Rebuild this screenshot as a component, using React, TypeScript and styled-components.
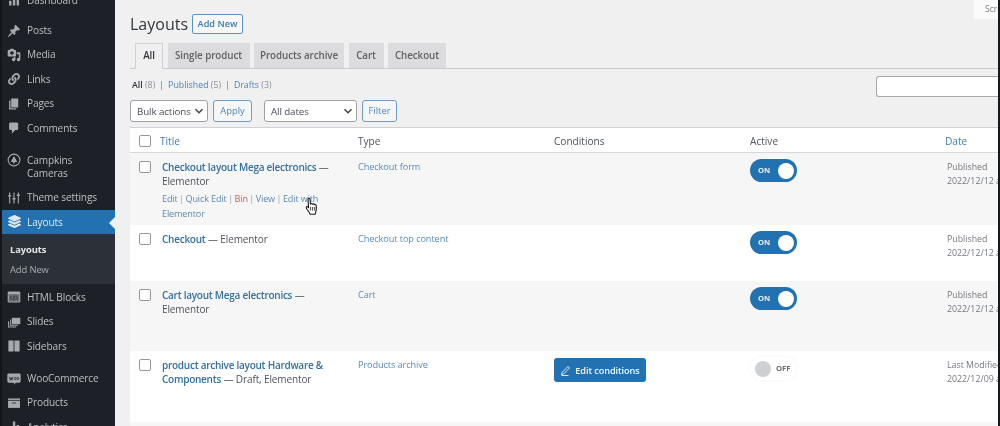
import React from "react";
import styled, { createGlobalStyle } from "styled-components";
import { FaLink, FaLayerGroup } from "react-icons/fa";

const Global = createGlobalStyle`
  html, body { margin: 0; padding: 0; background: #f0f0f1; overflow: hidden; }
  * { box-sizing: border-box; }
`;

const Page = styled.div`
  position: relative;
  width: 1000px;
  height: 426px;
  overflow: hidden;
  display: flex;
  font-family: "Open Sans", "Noto Sans", sans-serif;
  font-size: 10px;
  color: #3c434a;
  background: #f0f0f1;
  border-right: 2px solid #17191c;
  filter: blur(0.4px);
`;

const Side = styled.nav`
  width: 115px;
  flex: none;
  height: 426px;
  overflow: hidden;
  background: #1d2127;
  color: #c3c4c7;
  border-left: 2px solid #14161a;
`;

const MenuList = styled.div`
  margin-top: -12px;
  display: flex;
  flex-direction: column;
`;

const Item = styled.div<{ $gap?: number; $active?: boolean; $h?: number }>`
  position: relative;
  display: flex;
  align-items: ${(p) => (p.$h ? "flex-start" : "center")};
  height: ${(p) => p.$h ?? 24.4}px;
  margin-top: ${(p) => p.$gap ?? 0}px;
  padding-left: 25px;
  padding-top: ${(p) => (p.$h ? 7 : p.$active ? 2 : 0)}px;
  font-size: 10.1px;
  letter-spacing: -0.13px;
  line-height: 13px;
  flex: none;
  background: ${(p) => (p.$active ? "#2271b1" : "transparent")};
  color: ${(p) => (p.$active ? "#dfe9f2" : "#bcbfc3")};
`;

const IconSlot = styled.span<{ $active?: boolean; $top?: number }>`
  position: absolute;
  left: 5px;
  top: ${(p) => (p.$top !== undefined ? `${p.$top}px` : "50%")};
  margin-top: ${(p) => (p.$top !== undefined ? 0 : -7)}px;
  width: 14px;
  height: 14px;
  display: flex;
  align-items: center;
  justify-content: center;
  color: ${(p) => (p.$active ? "#dfe9f2" : "#a7aaad")};
  svg { display: block; }
`;

const Arrow = styled.span`
  position: absolute;
  right: 0;
  top: 7px;
  border-style: solid;
  border-width: 6px 6px 6px 0;
  border-color: transparent #f0f0f1 transparent transparent;
`;

const SubMenu = styled.div`
  background: #2c3138;
  height: 50px;
  padding-top: 5px;
  flex: none;
  display: flex;
  flex-direction: column;
  margin-bottom: 1px;
`;

const SubItem = styled.div<{ $on?: boolean }>`
  height: 20px;
  line-height: 21px;
  padding-left: 8px;
  font-size: 9.4px;
  letter-spacing: -0.1px;
  font-weight: ${(p) => (p.$on ? 700 : 400)};
  color: ${(p) => (p.$on ? "#e6e7e8" : "#a9adb2")};
`;

const Main = styled.main`
  flex: 1;
  min-width: 0;
  position: relative;
  padding-left: 15px;
  display: flex;
  flex-direction: column;
  overflow: hidden;
`;

const ScreenTab = styled.div`
  position: absolute;
  top: 0;
  right: 0;
  width: 24px;
  height: 19px;
  background: #fbfbfc;
  padding-left: 11px;
  line-height: 19px;
  font-size: 8.6px;
  color: #7a7e83;
  white-space: nowrap;
  overflow: hidden;
`;

const HeadRow = styled.div`
  display: flex;
  align-items: center;
  gap: 4px;
  height: 20px;
  margin-top: 14px;
`;

const Heading = styled.h1`
  margin: 0;
  font-size: 16px;
  font-weight: 400;
  color: #32373c;
  line-height: 20px;
`;

const AddNew = styled.span`
  width: 51px;
  height: 20px;
  line-height: 18px;
  border: 1px solid #5b93c2;
  border-radius: 2px;
  background: #f6f7f7;
  text-align: center;
  font-size: 9.2px;
  font-weight: 600;
  color: #3a7cb0;
`;

const Tabs = styled.div`
  display: flex;
  height: 26px;
  margin-top: 9px;
  padding-left: 5px;
  gap: 4.5px;
  border-bottom: 1px solid #c9cbce;
`;

const Tab = styled.div<{ $w: number; $on?: boolean }>`
  width: ${(p) => p.$w}px;
  height: ${(p) => (p.$on ? 26 : 25)}px;
  border: 1px solid ${(p) => (p.$on ? "#d0d2d5" : "#dcdcde")};
  border-bottom: ${(p) => (p.$on ? "none" : "1px solid #dcdcde")};
  background: ${(p) => (p.$on ? "#f0f0f1" : "#dcdcde")};
  text-align: center;
  line-height: 24px;
  font-size: 9.8px;
  letter-spacing: -0.07px;
  font-weight: 600;
  color: ${(p) => (p.$on ? "#32373c" : "#5e6267")};
`;

const FilterBar = styled.div`
  display: flex;
  justify-content: space-between;
  height: 21px;
  margin-top: 7px;
`;

const Subsub = styled.div`
  margin-top: 2px;
  padding-left: 2px;
  font-size: 8.8px;
  line-height: 14px;
  color: #8a8e93;
  b { color: #32373c; font-weight: 600; }
  a { color: #4a86b8; }
  i { font-style: normal; color: #6a6f75; margin: 0 4px; }
`;

const Search = styled.div`
  width: 122px;
  height: 21px;
  background: #fff;
  border: 1px solid #a5a8ac;
  border-right: none;
  border-radius: 3px 0 0 3px;
`;

const Controls = styled.div`
  display: flex;
  height: 22px;
  margin-top: 3px;
`;

const Select = styled.div<{ $w: number; $gap: number }>`
  width: ${(p) => p.$w}px;
  margin-left: ${(p) => p.$gap}px;
  height: 22px;
  padding: 0 3px 0 6px;
  background: #fff;
  border: 1px solid #9ea2a7;
  border-radius: 3px;
  display: flex;
  align-items: center;
  justify-content: space-between;
  font-size: 9.8px;
  letter-spacing: -0.12px;
  white-space: nowrap;
  color: #4a4f55;
`;

const Ghost = styled.div<{ $w: number; $gap: number }>`
  width: ${(p) => p.$w}px;
  margin-left: ${(p) => p.$gap}px;
  height: 22px;
  line-height: 20px;
  text-align: center;
  border: 1px solid #6f9dc4;
  border-radius: 3px;
  background: #f4f6f8;
  color: #4f88b8;
  font-size: 9.4px;
`;

const Table = styled.div`
  margin-top: 5px;
  width: 868px;
  background: #fff;
  border-top: 1px solid #cfd1d4;
`;

const grid = "30px 198px 196px 196px 195px 53px";

const HeaderRow = styled.div`
  display: grid;
  grid-template-columns: ${grid};
  height: 25px;
  padding-top: 1px;
  align-items: center;
  border-bottom: 1px solid #d5d7da;
  font-size: 10.1px;
  color: #50555b;
`;

const Row = styled.div<{ $h: number; $alt?: boolean }>`
  display: grid;
  grid-template-columns: ${grid};
  height: ${(p) => p.$h}px;
  background: ${(p) => (p.$alt ? "#f6f6f7" : "#fff")};
  align-items: start;
  padding-top: 7px;
`;

const Box = styled.span`
  display: block;
  width: 12px;
  height: 12px;
  margin-left: 9px;
  background: #fff;
  border: 1px solid #94989d;
  border-radius: 2px;
`;

const RowBox = styled(Box)`
  margin-top: 1px;
`;

const HeaderLink = styled.span`
  color: #3f7fb3;
`;

const TitleCell = styled.div`
  padding-left: 2px;
  width: 172px;
  font-size: 10px;
  letter-spacing: -0.12px;
  line-height: 14.3px;
  color: #50555b;
  a { color: #35719f; font-weight: 600; letter-spacing: -0.26px; }
`;

const TitleWide = styled(TitleCell)`
  width: 178px;
`;

const Actions = styled.div`
  margin-top: 3.5px;
  font-size: 9.1px;
  letter-spacing: -0.14px;
  line-height: 14.4px;
  color: #5d8bb3;
  span { color: #9a9ea3; margin: 0 1.5px; }
  em { font-style: normal; color: #b06a6a; background: #f9f1f1; }
`;

const TypeCell = styled.div`
  font-size: 9.2px;
  letter-spacing: -0.1px;
  line-height: 14px;
  color: #5a8db8;
`;

const ConditionsBtn = styled.div`
  width: 92px;
  height: 24px;
  display: flex;
  align-items: center;
  justify-content: center;
  gap: 3px;
  background: #2271b1;
  border-radius: 3px;
  color: #f0f6fb;
  font-size: 9.2px;
  font-weight: 600;
  letter-spacing: -0.1px;
`;

const Toggle = styled.div<{ $on?: boolean }>`
  position: relative;
  width: 47px;
  height: 23px;
  margin-top: -1px;
  border-radius: 12px;
  background: ${(p) => (p.$on ? "#2271b1" : "#fff")};
  box-shadow: ${(p) => (p.$on ? "none" : "0 0 3px rgba(0,0,0,.06)")};
  color: ${(p) => (p.$on ? "#e4eef6" : "#6a6e73")};
  font-size: 7.6px;
  font-weight: 700;
  line-height: 23px;
  padding-left: ${(p) => (p.$on ? 8 : 26)}px;
`;

const Knob = styled.span<{ $on?: boolean }>`
  position: absolute;
  top: 3.5px;
  left: ${(p) => (p.$on ? 28 : 5)}px;
  width: 16px;
  height: 16px;
  border-radius: 50%;
  background: ${(p) => (p.$on ? "#fff" : "#cfd0d2")};
`;

const DateCell = styled.div`
  padding-left: 2px;
  white-space: nowrap;
  font-size: 8.8px;
  line-height: 14px;
  color: #75797e;
`;

const Cursor = styled.svg`
  position: absolute;
  left: 190px;
  top: 197px;
`;

const Chevron = () => (
  <svg width="10" height="10" viewBox="0 0 10 10">
    <path d="M1.5 3.2 5 6.8l3.5-3.6" fill="none" stroke="#3c434a" strokeWidth="1.4" />
  </svg>
);

const S = ({ children, size = 14 }: { children: React.ReactNode; size?: number }) => (
  <svg width={size} height={size} viewBox="0 0 20 20" fill="currentColor">
    {children}
  </svg>
);

const Pin = () => <S><path d="M10.44 3.02l1.82-1.82 6.36 6.35-1.83 1.82c-1.05-.68-2.48-.57-3.41.36l-.75.75c-.92.93-1.04 2.35-.35 3.41l-1.83 1.82-2.41-2.41-2.8 2.79c-.42.42-3.38 2.71-3.8 2.29s1.86-3.39 2.28-3.8l2.79-2.79L4.1 9.36l1.83-1.82c1.05.69 2.48.57 3.4-.36l.75-.75c.93-.92 1.05-2.35.36-3.41z" /></S>;
const Media = () => <S><path d="M13 11V4c0-.55-.45-1-1-1h-1.67L9 1H5L3.67 3H2c-.55 0-1 .45-1 1v7c0 .55.45 1 1 1h10c.55 0 1-.45 1-1zM7 4.5c1.38 0 2.5 1.12 2.5 2.5S8.38 9.5 7 9.5 4.5 8.38 4.5 7 5.62 4.5 7 4.5zM14 6h5v10.5c0 1.38-1.12 2.5-2.5 2.5S14 17.88 14 16.5s1.12-2.5 2.5-2.5c.17 0 .34.02.5.05V9h-3V6zm-4 8.05V13h2v3.5c0 1.38-1.12 2.5-2.5 2.5S7 17.88 7 16.5 8.12 14 9.5 14c.17 0 .34.02.5.05z" /></S>;
const Pages = () => <S><path d="M6 15V2h10v13H6zm-1 1h8v2H3V5h2v11z" /></S>;
const Comments = () => <S><path d="M5 2h9c1.1 0 2 .9 2 2v7c0 1.1-.9 2-2 2h-2l-5 5v-5H5c-1.1 0-2-.9-2-2V4c0-1.1.9-2 2-2z" /></S>;
const Camp = () => <S><circle cx="10" cy="10" r="8.4" fill="none" stroke="currentColor" strokeWidth="1.5" /><path d="M10 4.2 14.6 13H11v2H9v-2H5.4z" /></S>;
const Sliders = () => (
  <S>
    <path d="M3 2h1.6v4H6v2H4.6v10H3V8H1.6V6H3zM9.2 2h1.6v8h1.4v2h-1.4v6H9.2v-6H7.8v-2h1.4zM15.4 2H17v3h1.4v2H17v11h-1.6V7H14V5h1.4z" />
  </S>
);
const HtmlBlock = () => (
  <S>
    <rect x="1" y="2" width="18" height="16" rx="2" />
    <rect x="2.5" y="6" width="15" height="10.5" fill="#1d2127" opacity=".45" />
    <path d="M7.5 8.5 5 11.2l2.5 2.7M12.5 8.5l2.5 2.7-2.5 2.7M10.8 8l-1.6 6.5" fill="none" stroke="#1d2127" strokeWidth="1" />
  </S>
);
const Slides = () => <S><path d="M7 4h12v9H7z" /><path d="M4.5 6.5H6V14h10v1.5H4.5z" /><path d="M1.5 9H3v7.5h10V18H1.5z" /></S>;
const Sidebars = () => <S><path d="M2 2h7.4v16H2zM10.6 2H18v16h-7.4z" /></S>;
const Woo = () => (
  <svg width="15" height="15" viewBox="0 0 20 20">
    <path d="M2.5 3h15A2 2 0 0 1 19.5 5v9a2 2 0 0 1-2 2H12l-1.5 3-1-3h-7a2 2 0 0 1-2-2V5a2 2 0 0 1 2-2z" fill="currentColor" />
    <path d="M3.5 7.5l1 5 1.5-4 1.2 4 1-5M10.2 10a1.4 1.8 0 1 0 2.8 0 1.4 1.8 0 1 0-2.8 0M14 10a1.4 1.8 0 1 0 2.8 0 1.4 1.8 0 1 0-2.8 0" fill="none" stroke="#1d2127" strokeWidth="1" />
  </svg>
);
const Products = () => <S><path d="M1.5 3.5h17V17h-17z" /><path d="M1.5 6.3h17M7 10h6" stroke="#1d2127" strokeWidth="1.1" /></S>;
const Bars = () => <S><path d="M3 11h3.4v7H3zM8.4 2h3.4v16H8.4zM13.8 7h3.4v11h-3.4z" /></S>;

type MI = { label: React.ReactNode; icon?: React.ReactNode; gap?: number; h?: number; top?: number };

const before: MI[] = [
  { label: "Dashboard", icon: <Bars /> },
  { label: "Posts", icon: <Pin />, gap: 6 },
  { label: "Media", icon: <Media /> },
  { label: "Links", icon: <FaLink size={12} /> },
  { label: "Pages", icon: <Pages /> },
  { label: "Comments", icon: <Comments /> },
  { label: <>Campkins<br />Cameras</>, icon: <Camp />, gap: 7, h: 38, top: 6 },
  { label: "Theme settings", icon: <Sliders /> },
];

const after: MI[] = [
  { label: "HTML Blocks", icon: <HtmlBlock /> },
  { label: "Slides", icon: <Slides /> },
  { label: "Sidebars", icon: <Sidebars /> },
  { label: "WooCommerce", icon: <Woo />, gap: 8 },
  { label: "Products", icon: <Products /> },
  { label: "Analytics", icon: <Bars /> },
];

const renderItem = (m: MI, i: number) => (
  <Item key={i} $gap={m.gap} $h={m.h}>
    <IconSlot $top={m.top}>{m.icon}</IconSlot>
    <span>{m.label}</span>
  </Item>
);

const tabs = [
  { t: "All", w: 28, on: true },
  { t: "Single product", w: 82 },
  { t: "Products archive", w: 90 },
  { t: "Cart", w: 35 },
  { t: "Checkout", w: 58 },
];

export default function App() {
  return (
    <>
      <Global />
      <Page>
        <Side>
          <MenuList>
            {before.map(renderItem)}
            <Item $active>
              <IconSlot $active><FaLayerGroup size={13} /></IconSlot>
              <span>Layouts</span>
              <Arrow />
            </Item>
            <SubMenu>
              <SubItem $on>Layouts</SubItem>
              <SubItem>Add New</SubItem>
            </SubMenu>
            {after.map(renderItem)}
          </MenuList>
        </Side>
        <Main>
          <ScreenTab>Screen Options</ScreenTab>
          <HeadRow>
            <Heading>Layouts</Heading>
            <AddNew>Add New</AddNew>
          </HeadRow>
          <Tabs>
            {tabs.map((t) => (
              <Tab key={t.t} $w={t.w} $on={t.on}>{t.t}</Tab>
            ))}
          </Tabs>
          <FilterBar>
            <Subsub>
              <b>All</b> (8)<i>|</i><a>Published</a> (5)<i>|</i><a>Drafts</a> (3)
            </Subsub>
            <Search />
          </FilterBar>
          <Controls>
            <Select $w={78} $gap={0}>Bulk actions<Chevron /></Select>
            <Ghost $w={39} $gap={5}>Apply</Ghost>
            <Select $w={93} $gap={12}>All dates<Chevron /></Select>
            <Ghost $w={35} $gap={5}>Filter</Ghost>
          </Controls>
          <Table>
            <HeaderRow>
              <Box />
              <HeaderLink>Title</HeaderLink>
              <span>Type</span>
              <span>Conditions</span>
              <span>Active</span>
              <HeaderLink>Date</HeaderLink>
            </HeaderRow>
            <Row $h={72} $alt>
              <RowBox />
              <TitleCell>
                <a>Checkout layout Mega electronics</a> — Elementor
                <Actions>
                  Edit<span>|</span>Quick Edit<span>|</span><em>Bin</em><span>|</span>View<span>|</span>Edit with Elementor
                </Actions>
              </TitleCell>
              <TypeCell>Checkout form</TypeCell>
              <div />
              <Toggle $on>ON<Knob $on /></Toggle>
              <DateCell>Published<br />2022/12/12 at 9:14 am</DateCell>
            </Row>
            <Row $h={56}>
              <RowBox />
              <TitleCell><a>Checkout</a> — Elementor</TitleCell>
              <TypeCell>Checkout top content</TypeCell>
              <div />
              <Toggle $on>ON<Knob $on /></Toggle>
              <DateCell>Published<br />2022/12/12 at 9:14 am</DateCell>
            </Row>
            <Row $h={70} $alt>
              <RowBox />
              <TitleCell><a>Cart layout Mega electronics</a> — Elementor</TitleCell>
              <TypeCell>Cart</TypeCell>
              <div />
              <Toggle $on>ON<Knob $on /></Toggle>
              <DateCell>Published<br />2022/12/12 at 9:14 am</DateCell>
            </Row>
            <Row $h={71}>
              <RowBox />
              <TitleWide><a>product archive layout Hardware &amp; Components</a> — Draft, Elementor</TitleWide>
              <TypeCell>Products archive</TypeCell>
              <ConditionsBtn>
                <svg width="12" height="12" viewBox="0 0 24 24" fill="none" stroke="currentColor" strokeWidth="1.8">
                  <path d="M4 17 16 5l3 3L7 20l-4 1zM3 23h14" />
                </svg>
                Edit conditions
              </ConditionsBtn>
              <Toggle>OFF<Knob /></Toggle>
              <DateCell>Last Modified<br />2022/12/09 at 3:20 pm</DateCell>
            </Row>
            <Row $h={20} $alt />
          </Table>
          <Cursor width="14" height="19" viewBox="0 0 14 19">
            <path d="M3.2 1.6c.8-.6 1.8 0 1.9 1l.3 4.4c.3-.6 1.6-.6 2 .2.4-.5 1.6-.4 1.9.4.5-.4 1.6-.2 1.8.7.4 1.7.4 3.6 0 5.2-.3 1.4-.7 2.5-1 3.8H5.2c-.5-1.5-1.6-3-3.1-4.8-.7-.9-1.2-2-.7-2.6.5-.5 1.4-.2 2.2.8L3 2.6c0-.4 0-.8.2-1z" fill="#fff" stroke="#17191c" strokeWidth="1.1" strokeLinejoin="round" />
            <path d="M5.6 10v3.6M7.6 10v3.6M9.6 10v3.6" stroke="#17191c" strokeWidth=".8" />
          </Cursor>
        </Main>
      </Page>
    </>
  );
}
